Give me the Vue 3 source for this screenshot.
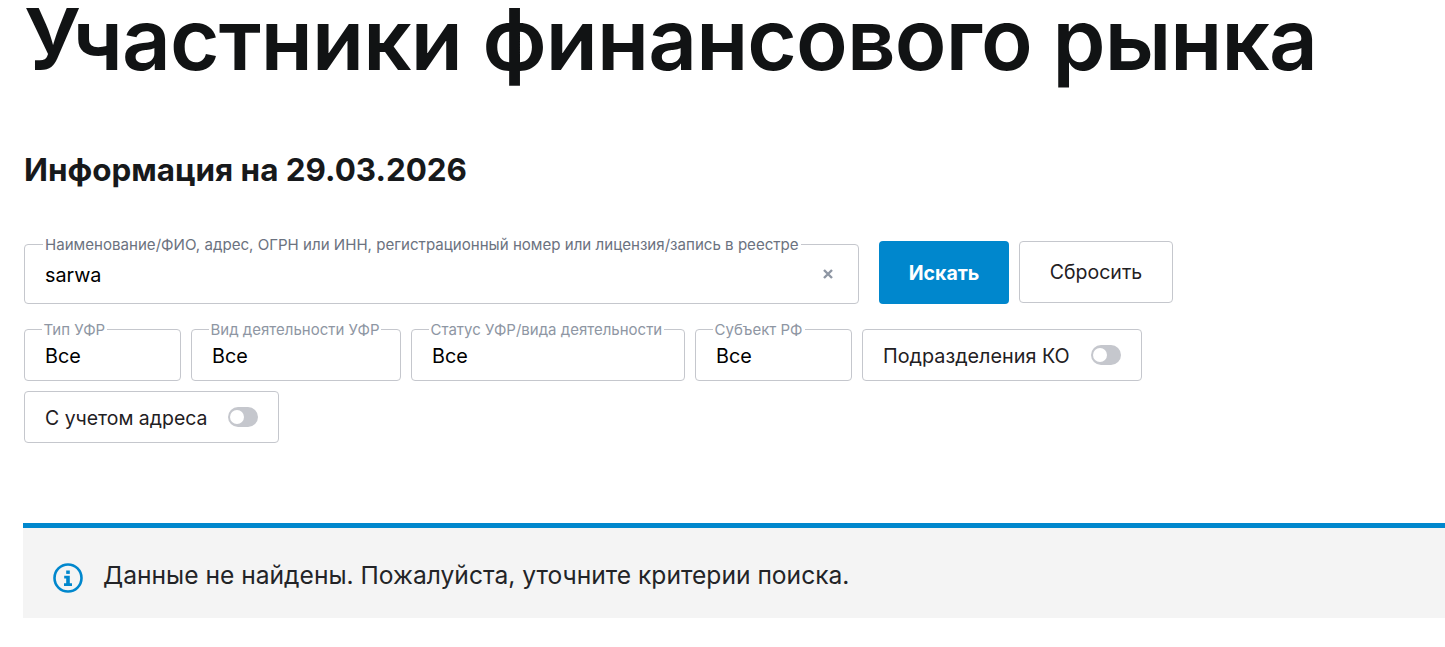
<template>
  <div class="page">
    <h1 class="title">Участники финансового рынка</h1>
    <h2 class="subtitle">Информация на 29.03.2026</h2>

    <form class="filters" @submit.prevent>
      <div class="search-row">
        <div class="field field--search">
          <span class="field__label field__label--dark">{{ searchLabel }}</span>
          <span class="field__value">sarwa</span>
          <svg class="clear" viewBox="0 0 10 10" width="10" height="10">
            <path d="M1 1l8 8M9 1l-8 8" stroke="#8e96a3" stroke-width="2.4" />
          </svg>
        </div>
        <button class="btn btn--primary" type="submit">Искать</button>
        <button class="btn btn--ghost" type="button">Сбросить</button>
      </div>

      <div class="select-row">
        <div v-for="s in selects" :key="s.label" class="field field--select" :style="{ width: s.width + 'px' }">
          <span class="field__label">{{ s.label }}</span>
          <span class="field__value">Все</span>
        </div>
        <label class="toggle toggle--wide">
          <span class="toggle__text">Подразделения КО</span>
          <i class="toggle__track"><i class="toggle__knob"></i></i>
        </label>
        <label class="toggle">
          <span class="toggle__text">С учетом адреса</span>
          <i class="toggle__track"><i class="toggle__knob"></i></i>
        </label>
      </div>
    </form>

    <div class="notice">
      <svg class="notice__icon" viewBox="0 0 30 30" width="30" height="30" fill="none">
        <circle cx="15" cy="15" r="13.500" stroke="#0087cd" stroke-width="2.600" />
        <rect x="13.200" y="7.500" width="3.600" height="3.400" fill="#0087cd" />
        <path d="M11.200 12.800h5.600v7.400h2.200v2.800h-8v-2.800h2.200v-4.600h-2z" fill="#0087cd" />
      </svg>
      <span class="notice__text">Данные не найдены. Пожалуйста, уточните критерии поиска.</span>
    </div>
  </div>
</template>

<script setup>
const searchLabel = 'Наименование/ФИО, адрес, ОГРН или ИНН, регистрационный номер или лицензия/запись в реестре'

const selects = [
  { label: 'Тип УФР', width: 157 },
  { label: 'Вид деятельности УФР', width: 210 },
  { label: 'Статус УФР/вида деятельности', width: 274 },
  { label: 'Субъект РФ', width: 157 }
]
</script>

<style>
body {
  background: #fff;
}
</style>

<style scoped>
.page {
  padding-left: 24px;
  font-family: Inter, "Noto Sans", sans-serif;
  color: #1f2023;
  height: 647px;
  overflow: hidden;
  box-sizing: border-box;
}
.title {
  margin: 0;
  font-size: 85px;
  line-height: 79px;
  font-weight: 600;
  letter-spacing: -0.85px;
  color: #111314;
  white-space: nowrap;
}
.subtitle {
  margin: 71px 0 0;
  font-size: 31.400px;
  line-height: 40px;
  font-weight: 700;
  color: #17191b;
}
.filters {
  margin-top: 51px;
}
.search-row {
  display: flex;
  align-items: flex-start;
  gap: 10px;
}
.field {
  position: relative;
  box-sizing: border-box;
  border: 1px solid #c5c7cd;
  border-radius: 4px;
  background: #fff;
  display: flex;
  align-items: center;
  padding-left: 20px;
  color: #000;
  font-size: 19.800px;
}
.field--search {
  width: 835px;
  height: 60px;
  margin: 3px 10px 0 0;
}
.field--select {
  height: 52px;
}
.field__label {
  position: absolute;
  left: 16.500px;
  top: -9px;
  padding: 0 2px;
  background: #fff;
  font-size: 15px;
  line-height: 17px;
  color: #8e96a3;
  white-space: nowrap;
}
.field__label--dark {
  left: 18px;
  font-size: 15.100px;
  color: #6b7280;
}
.field__value {
  margin-top: 1px;
}
.clear {
  position: absolute;
  right: 25px;
  top: 24px;
}
.btn {
  box-sizing: border-box;
  height: 62px;
  border-radius: 4px;
  font-family: inherit;
  font-size: 19.500px;
  cursor: pointer;
}
.btn--primary {
  width: 130px;
  height: 63px;
  border: 0;
  background: #0087cd;
  color: #fff;
  font-weight: 700;
}
.btn--ghost {
  width: 154px;
  border: 1px solid #c5c7cd;
  background: #fff;
  color: #1f2023;
}
.select-row {
  display: flex;
  flex-wrap: wrap;
  gap: 10px;
  margin-top: 25px;
  width: 1140px;
}
.toggle {
  box-sizing: border-box;
  height: 52px;
  display: flex;
  align-items: center;
  gap: 21px;
  padding: 0 20px;
  border: 1px solid #c5c7cd;
  border-radius: 4px;
  font-size: 19.450px;
}
.toggle--wide {
  font-size: 19.800px;
}
.toggle__text {
  margin-top: 2px;
}
.toggle__track {
  display: block;
  width: 30px;
  height: 20px;
  border-radius: 10px;
  background: #c5c7cd;
  position: relative;
}
.toggle__knob {
  position: absolute;
  left: 2px;
  top: 3px;
  width: 14px;
  height: 14px;
  border-radius: 50%;
  background: #fff;
}
.notice {
  margin: 80px 0 0 -1px;
  box-sizing: border-box;
  height: 95px;
  border-top: 5px solid #0087cd;
  background: #f4f4f4;
  display: flex;
  align-items: center;
  gap: 20px;
  padding-left: 30px;
  font-size: 24.600px;
  color: #232427;
}
.notice__icon {
  flex: none;
  margin-top: 10px;
}
.notice__text {
  margin-top: 3px;
}
</style>
